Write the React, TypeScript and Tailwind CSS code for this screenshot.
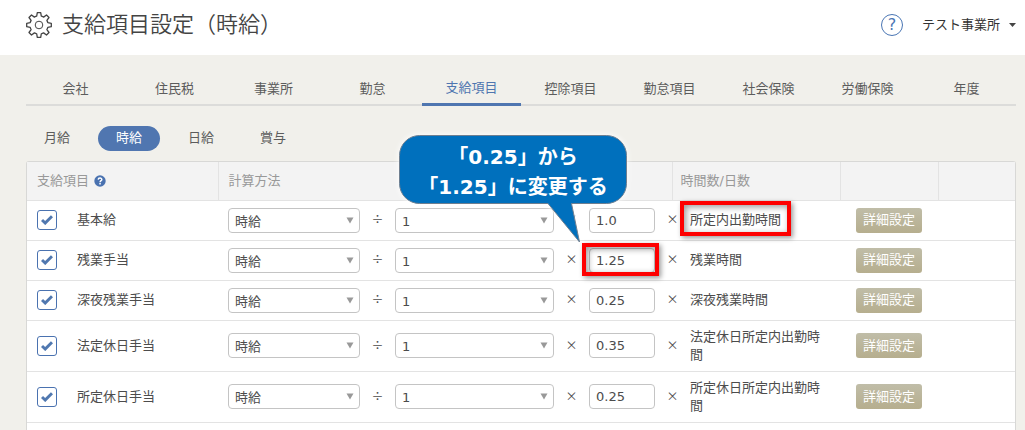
import { useState } from 'react'

const tabs = ['会社', '住民税', '事業所', '勤怠', '支給項目', '控除項目', '勤怠項目', '社会保険', '労働保険', '年度']
const payTypes = ['月給', '時給', '日給', '賞与']

type PayItem = {
  name: string
  rate: string
  hours: string
  markRate?: boolean
  markHours?: boolean
}

const items: PayItem[] = [
  { name: '基本給', rate: '1.0', hours: '所定内出勤時間', markHours: true },
  { name: '残業手当', rate: '1.25', hours: '残業時間', markRate: true },
  { name: '深夜残業手当', rate: '0.25', hours: '深夜残業時間' },
  { name: '法定休日手当', rate: '0.35', hours: '法定休日所定内出勤時間' },
  { name: '所定休日手当', rate: '0.25', hours: '所定休日所定内出勤時間' },
]

function GearIcon() {
  return (
    <svg width="26" height="26" viewBox="0 0 26 26" fill="none" stroke="#444" strokeWidth="1.3" strokeLinejoin="round">
      <path d="M11.300 .7h3.400l.6 3.500c.9.200 1.500.5 2.300.9l2.900-2.100 2.500 2.500-2.100 2.900c.4.800.7 1.400.9 2.300l3.500.6v3.400l-3.500.6c-.2.900-.5 1.500-.9 2.300l2.100 2.900-2.500 2.500-2.900-2.100c-.8.4-1.400.7-2.300.9l-.6 3.500h-3.400l-.6-3.500c-.9-.2-1.500-.5-2.300-.9l-2.900 2.100L3 20.500l2.100-2.900c-.4-.8-.7-1.400-.9-2.300l-3.500-.6v-3.400l3.500-.6c.2-.9.500-1.500.9-2.300L3 5.500 5.500 3l2.900 2.100c.8-.4 1.400-.7 2.300-.9z" />
      <circle cx="13" cy="13" r="3.8" strokeWidth="1" />
    </svg>
  )
}

function Select({ label, value, className }: { label: string; value: string; className: string }) {
  return (
    <div className={`relative ${className}`}>
      <select
        aria-label={label}
        defaultValue={value}
        className="block h-[25px] w-full appearance-none rounded-[4px] border border-[#c4c4c4] bg-white pt-[3px] pl-[6px] text-[13px] leading-5 text-[#4c4c4c]"
      >
        <option>{value}</option>
      </select>
      <svg className="pointer-events-none absolute top-[9px] right-[6px]" width="8" height="7" viewBox="0 0 8 7">
        <path d="M.5 .5h7L4 6.5z" fill="#999" />
      </svg>
    </div>
  )
}

function Operator({ sign }: { sign: string }) {
  return <span className="font-['Noto_Sans_CJK_JP',sans-serif] text-xs">{sign}</span>
}

function Callout() {
  return (
    <div className="pointer-events-none absolute top-[-113px] left-[-190px] z-20 h-[108px] w-[228px]">
      <svg className="absolute inset-0 overflow-visible drop-shadow-[0_0_3px_#fff]" width="228" height="108" viewBox="0 0 228 108">
        <path
          d="M20.500 .5h187a20 20 0 0 1 20 20v28a20 20 0 0 1-20 20h-35L180.500 107 149 68.500H20.500a20 20 0 0 1-20-20v-28a20 20 0 0 1 20-20z"
          fill="#0070bd"
          stroke="#6f7f90"
        />
      </svg>
      <p className="relative pt-[7px] text-center text-xl leading-[30px] font-bold whitespace-nowrap text-white">
        「0.25」から
        <br />
        「1.25」に変更する
      </p>
    </div>
  )
}

function Row({ item }: { item: PayItem }) {
  const [enabled, setEnabled] = useState(true)

  return (
    <tr className="border-b border-[#e3e3e3] text-[#4c4c4c]">
      <td className="py-[7px] pl-[10px]">
        <label className="flex items-center">
          <input
            type="checkbox"
            checked={enabled}
            onChange={(e) => setEnabled(e.target.checked)}
            className="peer sr-only"
          />
          <span className="flex h-5 w-5 items-center justify-center rounded-[3px] border border-[#4a72b0] bg-white">
            {enabled && (
              <svg width="12" height="10" viewBox="0 0 12 10" fill="none" stroke="#5078b0" strokeWidth="3">
                <path d="M1 5l3.200 3L11 1.200" />
              </svg>
            )}
          </span>
          <span className="pl-5">{item.name}</span>
        </label>
      </td>
      <td className="py-[7px] pl-[10px]">
        <div className="flex items-center">
          <Select label={`${item.name} 計算方法`} value="時給" className="w-[132px]" />
          <span className="w-[35px] text-center">
            <Operator sign="÷" />
          </span>
          <Select label={`${item.name} 除数`} value="1" className="w-[159px]" />
          <span className="w-[35px] text-center">
            <Operator sign="×" />
          </span>
          <div className="relative w-[66px]">
            <input
              type="text"
              aria-label={`${item.name} 倍率`}
              defaultValue={item.rate}
              className="block h-[25px] w-full rounded-[4px] border border-[#c4c4c4] bg-white px-[6px] text-[13px] text-[#4c4c4c]"
            />
            {item.markRate && (
              <>
                <div className="pointer-events-none absolute -top-[5px] -right-1 -bottom-[3px] -left-[7px] border-4 border-[#fe0000] shadow-[2px_2px_5px_rgba(0,0,0,0.4),inset_2px_2px_6px_rgba(0,0,0,0.4)]" />
                <Callout />
              </>
            )}
          </div>
        </div>
      </td>
      <td colSpan={2} className="text-center">
        <Operator sign="×" />
      </td>
      <td className="py-[7px] pr-4 leading-[18px]">
        <span className="relative block w-fit">
          {item.hours}
          {item.markHours && (
            <span className="pointer-events-none absolute -inset-x-[10px] -top-[10px] -bottom-[7px] border-4 border-[#fe0000] shadow-[2px_2px_5px_rgba(0,0,0,0.4),inset_2px_2px_6px_rgba(0,0,0,0.4)]" />
          )}
        </span>
      </td>
      <td className="pl-4">
        <button
          type="button"
          className="block h-[25px] w-[66px] rounded-[3px] bg-linear-to-b from-[#c0bda8] to-[#b6ae8e] text-[13px] leading-5 text-white"
        >
          詳細設定
        </button>
      </td>
      <td />
    </tr>
  )
}

export default function App() {
  const [tab, setTab] = useState('支給項目')
  const [payType, setPayType] = useState('時給')

  return (
    <div className="min-h-screen bg-[#f1f0eb] font-['DejaVu_Sans','Noto_Sans_CJK_JP',sans-serif] text-[13px] text-[#5c5c5c]">
      <header className="flex h-[55px] items-center justify-between bg-white pr-[9px] pb-[5px] pl-[26px]">
        <div className="flex items-center gap-[10px]">
          <GearIcon />
          <h1 className="text-[22px] leading-8 font-[350] text-[#444]">支給項目設定（時給）</h1>
        </div>
        <div className="flex items-center gap-[19px]">
          <button
            type="button"
            aria-label="ヘルプ"
            className="flex h-[22px] w-[22px] items-center justify-center rounded-full border border-[#4a76b4] text-base text-[#4a76b4]"
          >
            ?
          </button>
          <button type="button" className="flex items-center gap-[9px] text-[13px] text-[#333]">
            テスト事業所
            <svg width="7" height="4" viewBox="0 0 7 4">
              <path d="M0 0h7L3.500 4z" fill="#444" />
            </svg>
          </button>
        </div>
      </header>

      <main className="pr-[9px] pl-[26px]">
        <nav className="flex pt-[15px]">
          {tabs.map((t) => (
            <button
              key={t}
              type="button"
              onClick={() => setTab(t)}
              className={`h-9 flex-1 pt-[3px] text-[13px] ${
                t === tab ? 'border-b-3 border-[#4f76b0] text-[#4f76b0]' : 'border-b-2 border-[#dcdcda] text-[#5c5c5c]'
              }`}
            >
              {t}
            </button>
          ))}
        </nav>

        <div className="flex gap-[10px] pt-5">
          {payTypes.map((p) => (
            <button
              key={p}
              type="button"
              onClick={() => setPayType(p)}
              className={`h-[25px] w-[62px] rounded-full pb-[2px] text-[13px] ${p === payType ? 'bg-[#5076b0] text-white' : 'text-[#5c5c5c]'}`}
            >
              {p}
            </button>
          ))}
        </div>

        <div className="mt-[10px] rounded-t-[3px] border border-b-0 border-[#d8d8d6] bg-white pb-2">
          <table className="w-full table-fixed border-collapse">
            <colgroup>
              <col className="w-[191px]" />
              <col className="w-[437px]" />
              <col className="w-[17px]" />
              <col className="w-[18px]" />
              <col className="w-[150px]" />
              <col className="w-[98px]" />
              <col />
            </colgroup>
            <thead>
              <tr className="h-[38px] border-b border-[#e3e3e3] bg-[#f3f3f3] text-left text-[#999]">
                <th className="border-r border-[#e3e3e3] pl-[10px] font-normal">
                  <span className="flex items-center gap-[5px]">
                    支給項目
                    <svg width="12" height="12" viewBox="0 0 12 12">
                      <circle cx="6" cy="6" r="5.700" fill="#4a72b0" />
                      <path d="M4.200 4.600C4.300 2.500 7.900 2.600 7.800 4.700 7.700 5.700 6.100 5.800 6.100 7.200" fill="none" stroke="#fff" strokeWidth="1.500" />
                      <path d="M5.300 8.100h1.500v1.500H5.300z" fill="#fff" />
                    </svg>
                  </span>
                </th>
                <th colSpan={2} className="border-r border-[#e3e3e3] pl-[10px] font-normal">計算方法</th>
                <th colSpan={2} className="border-r border-[#e3e3e3] pl-[8px] font-normal">時間数/日数</th>
                <th className="border-r border-[#e3e3e3]" />
                <th />
              </tr>
            </thead>
            <tbody>
              {items.map((item) => (
                <Row key={item.name} item={item} />
              ))}
            </tbody>
          </table>
        </div>
      </main>
    </div>
  )
}
